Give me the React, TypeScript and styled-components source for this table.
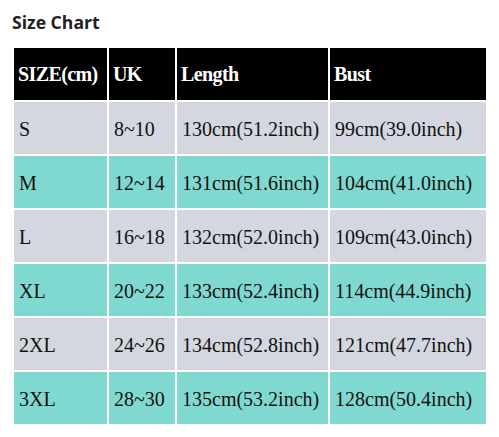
import React from "react";
import styled, { createGlobalStyle } from "styled-components";

const Global = createGlobalStyle`
  html, body { margin: 0; padding: 0; background: #fff; }
`;

const Page = styled.div`
  padding: 10px 12px;
  font-family: "Liberation Serif", serif;
`;

const Title = styled.h2`
  margin: 0 0 12px 0;
  font-family: "Open Sans", "Noto Sans", sans-serif;
  font-weight: 700;
  font-size: 17.6px;
  line-height: 24px;
  color: #222;
`;

const Table = styled.table`
  border-collapse: separate;
  border-spacing: 2px;
  width: 476px;
  table-layout: fixed;
`;

const HeadCell = styled.th<{ $w: number }>`
  width: ${(p) => p.$w}px;
  height: 52px;
  padding: 0 0 0 4px;
  background: #000;
  color: #fff;
  text-align: left;
  font-family: "Liberation Serif", serif;
  font-weight: 700;
  font-size: 20px;
  letter-spacing: -0.6px;
  box-sizing: border-box;
`;

const Cell = styled.td<{ $alt: boolean }>`
  height: 52px;
  padding: 2px 0 0 5px;
  background: ${(p) => (p.$alt ? "#80d9d0" : "#d4d7df")};
  color: #111;
  font-family: "Liberation Serif", serif;
  font-size: 20px;
  white-space: nowrap;
  box-sizing: border-box;
`;

const headers: [string, number][] = [
  ["SIZE(cm)", 93],
  ["UK", 66],
  ["Length", 151],
  ["Bust", 156],
];

const rows = [
  ["S", "8~10", "130cm(51.2inch)", "99cm(39.0inch)"],
  ["M", "12~14", "131cm(51.6inch)", "104cm(41.0inch)"],
  ["L", "16~18", "132cm(52.0inch)", "109cm(43.0inch)"],
  ["XL", "20~22", "133cm(52.4inch)", "114cm(44.9inch)"],
  ["2XL", "24~26", "134cm(52.8inch)", "121cm(47.7inch)"],
  ["3XL", "28~30", "135cm(53.2inch)", "128cm(50.4inch)"],
];

export default function App() {
  return (
    <>
      <Global />
      <Page>
        <Title>Size Chart</Title>
        <Table>
          <thead>
            <tr>
              {headers.map(([h, w]) => (
                <HeadCell key={h} $w={w}>
                  {h}
                </HeadCell>
              ))}
            </tr>
          </thead>
          <tbody>
            {rows.map((r, i) => (
              <tr key={r[0]}>
                {r.map((c, j) => (
                  <Cell key={j} $alt={i % 2 === 1}>
                    {c}
                  </Cell>
                ))}
              </tr>
            ))}
          </tbody>
        </Table>
      </Page>
    </>
  );
}
